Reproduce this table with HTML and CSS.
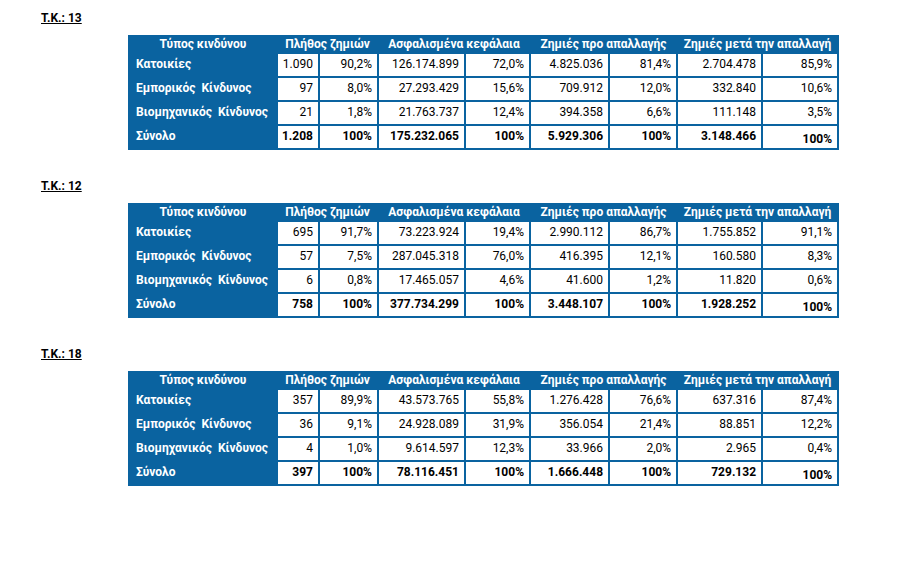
FILE: index.html
```html
<!DOCTYPE html>
<html lang="el">
<head>
<meta charset="utf-8">
<title>Τ.Κ.</title>
<link rel="stylesheet" href="styles.css">
</head>
<body>
<div class="page">

<section class="block">
  <div class="title">Τ.Κ.: 13</div>
  <table class="stats">
    <colgroup>
      <col class="c1"><col class="c2"><col class="c3"><col class="c4"><col class="c5"><col class="c6"><col class="c7"><col class="c8"><col class="c9">
    </colgroup>
    <tr class="head">
      <th>Τύπος κινδύνου</th>
      <th colspan="2">Πλήθος ζημιών</th>
      <th colspan="2">Ασφαλισμένα κεφάλαια</th>
      <th colspan="2">Ζημιές προ απαλλαγής</th>
      <th colspan="2">Ζημιές μετά την απαλλαγή</th>
    </tr>
    <tr>
      <td class="lbl">Κατοικίες</td>
      <td>1.090</td><td>90,2%</td><td>126.174.899</td><td>72,0%</td><td>4.825.036</td><td>81,4%</td><td>2.704.478</td><td>85,9%</td>
    </tr>
    <tr>
      <td class="lbl">Εμπορικός&nbsp; Κίνδυνος</td>
      <td>97</td><td>8,0%</td><td>27.293.429</td><td>15,6%</td><td>709.912</td><td>12,0%</td><td>332.840</td><td>10,6%</td>
    </tr>
    <tr>
      <td class="lbl">Βιομηχανικός&nbsp; Κίνδυνος</td>
      <td>21</td><td>1,8%</td><td>21.763.737</td><td>12,4%</td><td>394.358</td><td>6,6%</td><td>111.148</td><td>3,5%</td>
    </tr>
    <tr class="total">
      <td class="lbl">Σύνολο</td>
      <td>1.208</td><td>100%</td><td>175.232.065</td><td>100%</td><td>5.929.306</td><td>100%</td><td>3.148.466</td><td class="low">100%</td>
    </tr>
  </table>
</section>

<section class="block">
  <div class="title">Τ.Κ.: 12</div>
  <table class="stats">
    <colgroup>
      <col class="c1"><col class="c2"><col class="c3"><col class="c4"><col class="c5"><col class="c6"><col class="c7"><col class="c8"><col class="c9">
    </colgroup>
    <tr class="head">
      <th>Τύπος κινδύνου</th>
      <th colspan="2">Πλήθος ζημιών</th>
      <th colspan="2">Ασφαλισμένα κεφάλαια</th>
      <th colspan="2">Ζημιές προ απαλλαγής</th>
      <th colspan="2">Ζημιές μετά την απαλλαγή</th>
    </tr>
    <tr>
      <td class="lbl">Κατοικίες</td>
      <td>695</td><td>91,7%</td><td>73.223.924</td><td>19,4%</td><td>2.990.112</td><td>86,7%</td><td>1.755.852</td><td>91,1%</td>
    </tr>
    <tr>
      <td class="lbl">Εμπορικός&nbsp; Κίνδυνος</td>
      <td>57</td><td>7,5%</td><td>287.045.318</td><td>76,0%</td><td>416.395</td><td>12,1%</td><td>160.580</td><td>8,3%</td>
    </tr>
    <tr>
      <td class="lbl">Βιομηχανικός&nbsp; Κίνδυνος</td>
      <td>6</td><td>0,8%</td><td>17.465.057</td><td>4,6%</td><td>41.600</td><td>1,2%</td><td>11.820</td><td>0,6%</td>
    </tr>
    <tr class="total">
      <td class="lbl">Σύνολο</td>
      <td>758</td><td>100%</td><td>377.734.299</td><td>100%</td><td>3.448.107</td><td>100%</td><td>1.928.252</td><td class="low">100%</td>
    </tr>
  </table>
</section>

<section class="block">
  <div class="title">Τ.Κ.: 18</div>
  <table class="stats">
    <colgroup>
      <col class="c1"><col class="c2"><col class="c3"><col class="c4"><col class="c5"><col class="c6"><col class="c7"><col class="c8"><col class="c9">
    </colgroup>
    <tr class="head">
      <th>Τύπος κινδύνου</th>
      <th colspan="2">Πλήθος ζημιών</th>
      <th colspan="2">Ασφαλισμένα κεφάλαια</th>
      <th colspan="2">Ζημιές προ απαλλαγής</th>
      <th colspan="2">Ζημιές μετά την απαλλαγή</th>
    </tr>
    <tr>
      <td class="lbl">Κατοικίες</td>
      <td>357</td><td>89,9%</td><td>43.573.765</td><td>55,8%</td><td>1.276.428</td><td>76,6%</td><td>637.316</td><td>87,4%</td>
    </tr>
    <tr>
      <td class="lbl">Εμπορικός&nbsp; Κίνδυνος</td>
      <td>36</td><td>9,1%</td><td>24.928.089</td><td>31,9%</td><td>356.054</td><td>21,4%</td><td>88.851</td><td>12,2%</td>
    </tr>
    <tr>
      <td class="lbl">Βιομηχανικός&nbsp; Κίνδυνος</td>
      <td>4</td><td>1,0%</td><td>9.614.597</td><td>12,3%</td><td>33.966</td><td>2,0%</td><td>2.965</td><td>0,4%</td>
    </tr>
    <tr class="total">
      <td class="lbl">Σύνολο</td>
      <td>397</td><td>100%</td><td>78.116.451</td><td>100%</td><td>1.666.448</td><td>100%</td><td>729.132</td><td class="low">100%</td>
    </tr>
  </table>
</section>

</div>
</body>
</html>
```

FILE: styles.css
```css
html, body {
  margin: 0;
  padding: 0;
  background: #ffffff;
}

body {
  font-family: Roboto, "Liberation Sans", Arial, sans-serif;
  color: #000000;
}

.page {
  padding: 11px 0 0 41px;
}

.block {
  margin-bottom: 29px;
}

.title {
  font-size: 12px;
  line-height: 14px;
  font-weight: bold;
  text-decoration: underline;
  text-underline-offset: 1px;
  margin-bottom: 10px;
}

.stats {
  margin-left: 87px;
  width: 709px;
  border-collapse: collapse;
  table-layout: fixed;
  font-size: 12px;
  border: 2px solid #0a63a0;
}

.c1 { width: 148px; }
.c2 { width: 42px; }
.c3 { width: 59px; }
.c4 { width: 87px; }
.c5 { width: 65px; }
.c6 { width: 79px; }
.c7 { width: 68px; }
.c8 { width: 85px; }
.c9 { width: 76px; }

.stats th {
  background: #0a63a0;
  color: #ffffff;
  font-weight: bold;
  height: 14px;
  padding: 0 0 1px 0;
  line-height: 14px;
  text-align: center;
  white-space: nowrap;
  border: 2px solid #0a63a0;
}

.stats td {
  height: 19px;
  padding: 0 5px 3px 0;
  line-height: 14px;
  text-align: right;
  white-space: nowrap;
  border: 2px solid #0a63a0;
  background: #ffffff;
}

.stats td.lbl {
  background: #0a63a0;
  color: #ffffff;
  font-weight: bold;
  text-align: left;
  padding-left: 6px;
}

.stats .total td {
  font-weight: bold;
  height: 19px;
}

.stats .total td.low {
  padding-bottom: 0;
  padding-top: 3px;
}
```
